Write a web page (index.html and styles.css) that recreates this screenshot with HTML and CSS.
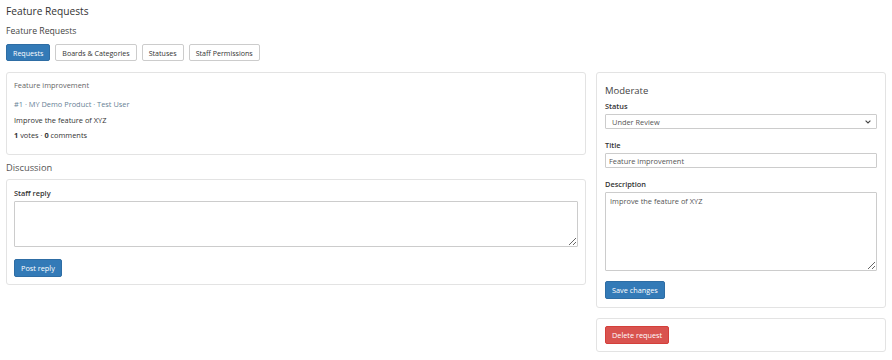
FILE: index.html
```html
<!DOCTYPE html>
<html lang="en">
  <head>
    <meta charset="UTF-8" />
    <title>Feature Requests</title>
    <link rel="stylesheet" href="styles.css">
  </head>
  <body>
    <div class="page">
      <h1 class="page-title">Feature Requests</h1>
      <h2 class="section-title">Feature Requests</h2>

      <div class="tabs">
        <button class="btn btn-tab btn-primary">Requests</button>
        <button class="btn btn-tab btn-default">Boards &amp; Categories</button>
        <button class="btn btn-tab btn-default">Statuses</button>
        <button class="btn btn-tab btn-default">Staff Permissions</button>
      </div>

      <div class="columns">
        <div class="main-col">
          <div class="card request-card">
            <div class="request-title">Feature improvement</div>
            <div class="request-meta">#1 · MY Demo Product · Test User</div>
            <div class="request-body">Improve the feature of XYZ</div>
            <div class="request-stats"><b>1</b> votes · <b>0</b> comments</div>
          </div>

          <h3 class="block-title">Discussion</h3>
          <div class="card reply-card">
            <label class="field-label">Staff reply</label>
            <textarea class="field reply-box"></textarea>
            <button class="btn btn-primary">Post reply</button>
          </div>
        </div>

        <div class="side-col">
          <div class="card">
            <h3 class="moderate-title">Moderate</h3>
            <label class="field-label">Status</label>
            <div class="select-wrap">
              <select class="field select-field">
                <option>Under Review</option>
              </select>
              <svg class="select-arrow" width="6" height="4" viewBox="0 0 6 4">
                <path d="M0.6 0.6 L3 3 L5.4 0.6" fill="none" stroke="#444" stroke-width="1.1" />
              </svg>
            </div>
            <label class="field-label">Title</label>
            <input class="field" type="text" value="Feature improvement">
            <label class="field-label">Description</label>
            <textarea class="field desc-box">Improve the feature of XYZ</textarea>
            <button class="btn btn-primary">Save changes</button>
          </div>
          <div class="card delete-card">
            <button class="btn btn-danger">Delete request</button>
          </div>
        </div>
      </div>
    </div>
  </body>
</html>
```

FILE: styles.css
```css
* {
  margin: 0;
  padding: 0;
  box-sizing: border-box;
  font-family: 'Open Sans', 'Noto Sans', sans-serif;
}

body {
  background-color: white;
  color: #333;
  font-size: 7.4px;
}

.page {
  padding: 3px 6px;
}

.page-title {
  font-size: 10.2px;
  font-weight: 400;
  line-height: 16px;
  color: #333;
}

.section-title {
  font-size: 8.7px;
  font-weight: 400;
  line-height: 14px;
  margin-top: 5px;
  color: #444;
}

.tabs {
  display: flex;
  gap: 5px;
  margin-top: 6px;
}

.btn {
  display: block;
  font-size: 7.3px;
  height: 18px;
  padding: 0 6px;
  border-radius: 2px;
  border: 1px solid transparent;
  cursor: pointer;
}

.btn-tab {
  font-size: 7.1px;
  height: 17px;
  padding: 0 6px;
}

.btn-primary {
  background-color: #337ab7;
  border-color: #2e6da4;
  color: white;
}

.btn-default {
  background-color: white;
  border-color: #ccc;
  color: #333;
}

.btn-danger {
  background-color: #d9534f;
  border-color: #d43f3a;
  color: white;
}

.columns {
  display: grid;
  grid-template-columns: 580px 290px;
  gap: 10px;
  margin-top: 11px;
}

.card {
  background-color: white;
  border: 1px solid #e3e3e3;
  border-radius: 3px;
  padding: 8px;
  margin-bottom: 10px;
}

.request-card {
  padding: 7px 7px 14px;
  margin-bottom: 7px;
}

.request-title {
  color: #666;
  line-height: 10px;
}

.request-meta {
  color: #687f96;
  line-height: 10px;
  margin-top: 9px;
}

.request-body {
  line-height: 10px;
  margin-top: 6px;
}

.request-stats {
  line-height: 10px;
  margin-top: 5px;
}

.block-title {
  font-size: 9.3px;
  font-weight: 400;
  line-height: 12px;
  color: #555;
  margin-bottom: 5px;
}

.reply-card {
  padding: 7px;
}

.field-label {
  display: block;
  font-weight: 600;
  line-height: 12px;
  margin-top: 2px;
  margin-bottom: 2px;
}

.reply-card .field-label {
  margin-top: 0;
}

.field {
  display: block;
  width: 100%;
  font-size: 7.4px;
  height: 15px;
  padding: 0 3px;
  border: 1px solid #ccc;
  border-radius: 1px;
  color: #555;
  background-color: white;
  margin-bottom: 10px;
}

.reply-box {
  height: 46px;
  margin-bottom: 12px;
  resize: vertical;
}

.moderate-title {
  font-size: 9.5px;
  font-weight: 400;
  line-height: 14px;
  color: #444;
  margin-top: 3px;
  margin-bottom: 2px;
}

.select-wrap {
  position: relative;
}

.select-field {
  appearance: none;
  -webkit-appearance: none;
  padding: 0 14px 0 6px;
}

.select-arrow {
  position: absolute;
  right: 6px;
  top: 6px;
}

.desc-box {
  height: 79px;
  padding: 3px 4px;
  margin-bottom: 10px;
  resize: vertical;
}

.delete-card {
  padding: 7px 8px;
}
```
